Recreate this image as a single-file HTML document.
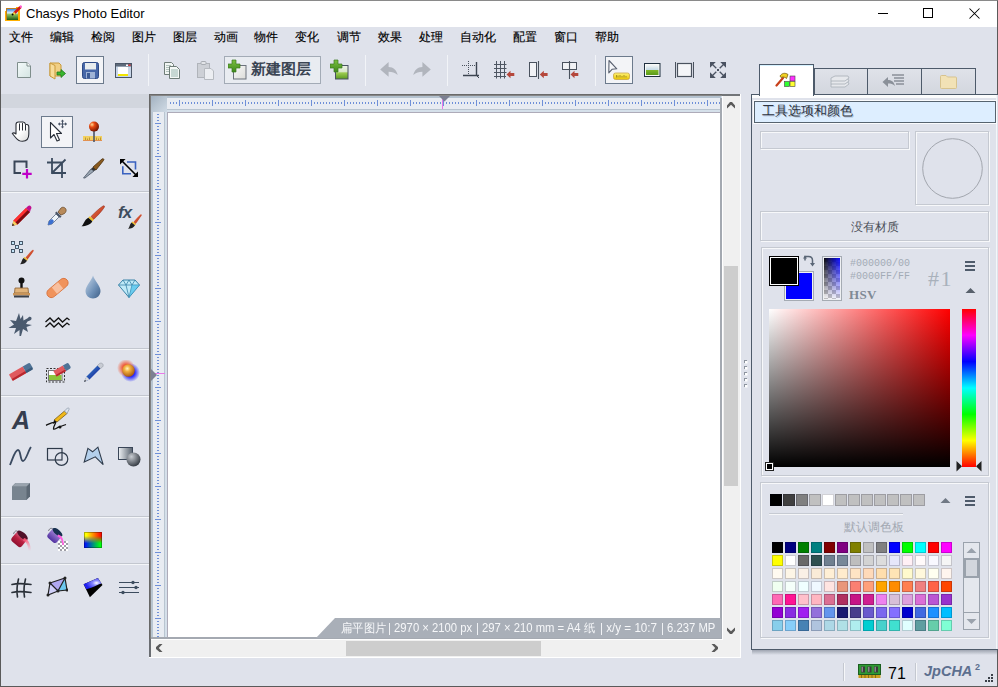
<!DOCTYPE html>
<html><head><meta charset="utf-8">
<style>
*{box-sizing:border-box}
html,body{margin:0;padding:0}
body{width:998px;height:687px;overflow:hidden;position:relative;background:#dfe2eb;font-family:"Liberation Sans",sans-serif;color:#000}
.a{position:absolute}
#win{position:absolute;left:0;top:0;width:998px;height:687px;border:1px solid #5a5a5a;border-top-color:#8a8a8a}
#title{left:1px;top:1px;width:996px;height:26px;background:#fff}
.menu{top:29px;font-size:12px;line-height:16px;color:#000;white-space:nowrap;-webkit-text-stroke:0.15px #000}
.sep{width:1px;background:#c7cbd3;border-right:1px solid #f2f4f8}
.tbtn{border:1px solid #6c7a8c;background:#f3f4f7}
.info{top:620px;font-size:12px;line-height:16px;color:#f6f7f9;white-space:nowrap;transform:scaleX(0.94);transform-origin:0 0}
.etch{border:1px solid #c5c9d1;box-shadow:1px 1px 0 #f7f8fa, inset 1px 1px 0 #f7f8fa}
.mono{font-family:"Liberation Mono",monospace;font-size:10px;line-height:13px;color:#a3abb6;white-space:nowrap}
</style></head><body>
<div id="win"></div>
<div id="title" class="a"></div>
<!-- app icon -->
<svg class="a" style="left:4px;top:4px" width="18" height="18" viewBox="0 0 18 18">
<defs><linearGradient id="gsky" x1="0" y1="0" x2="0" y2="1"><stop offset="0" stop-color="#3a86e0"/><stop offset="0.35" stop-color="#d8ecf8"/><stop offset="0.5" stop-color="#8ac060"/><stop offset="1" stop-color="#1e5a10"/></linearGradient></defs>
<path d="M1 7 H2 V16 H14 V4 H12 V3 H16 V17 H1 Z" fill="#ffb000"/>
<rect x="2" y="4" width="12" height="12" fill="#c08020"/>
<rect x="3" y="5" width="11" height="11" fill="url(#gsky)"/>
<path d="M10 9.5 L16.5 3" stroke="#d01818" stroke-width="2.6"/>
<path d="M9 10.5 L10.8 8.7" stroke="#f0e040" stroke-width="2.2"/>
<circle cx="8.6" cy="10.4" r="1" fill="#000"/>
<path d="M16.2 3.3 L17.6 1.9" stroke="#ff60d0" stroke-width="2.4"/>
</svg>
<div class="a" style="left:26px;top:5px;font-size:13px;line-height:17px;color:#000">Chasys Photo Editor</div>
<!-- window controls -->
<div class="a" style="left:878px;top:13px;width:10px;height:1px;background:#000"></div>
<div class="a" style="left:923px;top:8px;width:10px;height:10px;border:1px solid #000"></div>
<svg class="a" style="left:969px;top:8px" width="11" height="11" viewBox="0 0 11 11"><path d="M0.5 0.5 L10.5 10.5 M10.5 0.5 L0.5 10.5" stroke="#000" stroke-width="1.05"/></svg>

<!-- menu -->
<div class="a menu" style="left:9px">文件</div>
<div class="a menu" style="left:50px">编辑</div>
<div class="a menu" style="left:91px">检阅</div>
<div class="a menu" style="left:132px">图片</div>
<div class="a menu" style="left:173px">图层</div>
<div class="a menu" style="left:214px">动画</div>
<div class="a menu" style="left:254px">物件</div>
<div class="a menu" style="left:295px">变化</div>
<div class="a menu" style="left:337px">调节</div>
<div class="a menu" style="left:378px">效果</div>
<div class="a menu" style="left:419px">处理</div>
<div class="a menu" style="left:460px">自动化</div>
<div class="a menu" style="left:513px">配置</div>
<div class="a menu" style="left:554px">窗口</div>
<div class="a menu" style="left:595px">帮助</div>

<!-- TOOLBAR -->

<!-- separators -->
<div class="a sep" style="left:148px;top:54px;height:32px"></div>
<div class="a sep" style="left:365px;top:55px;height:31px"></div>
<div class="a sep" style="left:447px;top:55px;height:31px"></div>
<div class="a sep" style="left:595px;top:55px;height:31px"></div>
<!-- new -->
<svg class="a" style="left:16px;top:61px" width="16" height="18" viewBox="0 0 16 18">
<defs><linearGradient id="gnew" x1="0" y1="0" x2="1" y2="1"><stop offset="0" stop-color="#f4fafa"/><stop offset="1" stop-color="#d4e4e2"/></linearGradient></defs>
<path d="M1.5 1.5 H11 L14.5 5 V16.5 H1.5 Z" fill="url(#gnew)" stroke="#7f8e8c"/>
<path d="M11 1.5 V5 H14.5" fill="#fff" stroke="#7f8e8c"/>
</svg>
<!-- open -->
<svg class="a" style="left:49px;top:61px" width="18" height="19" viewBox="0 0 18 19">
<path d="M1 2 H10 L12 4 V15 H1 Z" fill="#f1cf84" stroke="#c99a3a"/>
<path d="M1 2 L6 4.5 V18 L1 15 Z" fill="#f7dc9a" stroke="#c99a3a"/>
<path d="M8 11 H12 V8.5 L16.5 12.5 L12 16.5 V14 H8 Z" fill="#39b52f" stroke="#1e7a1c" stroke-width="0.8"/>
</svg>
<!-- save (selected) -->
<div class="a tbtn" style="left:76px;top:56px;width:28px;height:28px"></div>
<svg class="a" style="left:82px;top:62px" width="17" height="17" viewBox="0 0 17 17">
<rect x="0.5" y="0.5" width="16" height="16" rx="2" fill="#4767a8" stroke="#2e4a86"/>
<rect x="3" y="1" width="11" height="6.5" fill="#e8ecee"/>
<rect x="4" y="10" width="9" height="6.5" fill="#9fb3d6"/>
<rect x="5" y="11" width="3" height="5.5" fill="#3c5a96"/>
</svg>
<!-- window -->
<svg class="a" style="left:115px;top:63px" width="17" height="15" viewBox="0 0 17 15">
<rect x="0.5" y="0.5" width="16" height="14" fill="#c9d6e8" stroke="#4a5566"/>
<rect x="1" y="1" width="15" height="2.5" fill="#5e6a7a"/>
<rect x="11" y="1.5" width="2" height="1.5" fill="#fff"/><rect x="13.5" y="1.5" width="2" height="1.5" fill="#e33"/>
<rect x="3" y="4" width="10" height="9" fill="#fff"/>
<rect x="3" y="11" width="10" height="2" fill="#f2e500"/>
</svg>
<!-- copy -->
<svg class="a" style="left:163px;top:61px" width="18" height="18" viewBox="0 0 18 18">
<path d="M1.5 1.5 H8.5 L10.5 3.5 V13.5 H1.5 Z" fill="#f2f6f4" stroke="#6f7d78"/>
<path d="M3 4.5 H8 M3 6.5 H8 M3 8.5 H8 M3 10.5 H6" stroke="#a9bcb6" stroke-width="0.9"/>
<path d="M6.5 5.5 H13.5 L16.5 8.5 V17.5 H6.5 Z" fill="#f4f8f6" stroke="#6f7d78"/>
<path d="M8 9 H15 M8 11 H15 M8 13 H15 M8 15 H15" stroke="#8fb0a8" stroke-width="0.9"/>
</svg>
<!-- paste disabled -->
<svg class="a" style="left:196px;top:60px" width="19" height="20" viewBox="0 0 19 20">
<rect x="1.5" y="3.5" width="12" height="14" fill="#cdd0d6" stroke="#b0b4ba"/>
<rect x="5" y="1.5" width="5" height="3" rx="1" fill="#e2e4e8" stroke="#a9adb3"/>
<path d="M8.5 8.5 H15 L17.5 11 V19.5 H8.5 Z" fill="#eceef2" stroke="#b6bac0"/>
</svg>
<!-- new layer button -->
<div class="a" style="left:224px;top:56px;width:97px;height:28px;border:1px solid #a3abb6;background:#e9ecf1"></div>
<svg class="a" style="left:228px;top:59px" width="19" height="21" viewBox="0 0 19 21">
<defs><linearGradient id="gplus" x1="0" y1="0" x2="0" y2="1"><stop offset="0" stop-color="#7cc040"/><stop offset="1" stop-color="#3f8a1c"/></linearGradient>
<linearGradient id="gsqw" x1="0" y1="0" x2="1" y2="1"><stop offset="0" stop-color="#fafafa"/><stop offset="1" stop-color="#dcdcd8"/></linearGradient></defs>
<rect x="5.5" y="6.5" width="12.5" height="13.5" fill="url(#gsqw)" stroke="#6c727c"/>
<path d="M4 1 H8 V5 H12 V9 H8 V13 H4 V9 H0 V5 H4 Z" fill="url(#gplus)" stroke="#3a7a20" stroke-width="0.7"/>
</svg>
<div class="a" style="left:251px;top:59px;font-size:15px;line-height:20px;font-weight:bold;color:#3b4553;letter-spacing:0px">新建图层</div>
<!-- new layer from image -->
<svg class="a" style="left:330px;top:59px" width="19" height="21" viewBox="0 0 19 21">
<defs><linearGradient id="gland" x1="0" y1="0" x2="0" y2="1"><stop offset="0" stop-color="#eef2e8"/><stop offset="0.45" stop-color="#d8e8c8"/><stop offset="0.55" stop-color="#9ccc50"/><stop offset="1" stop-color="#5a9a20"/></linearGradient></defs>
<rect x="5.5" y="6.5" width="12.5" height="13.5" fill="url(#gland)" stroke="#4a5262"/>
<path d="M4 1 H8 V5 H12 V9 H8 V13 H4 V9 H0 V5 H4 Z" fill="url(#gplus)" stroke="#3a7a20" stroke-width="0.7"/>
</svg>
<!-- undo / redo -->
<svg class="a" style="left:379px;top:61px" width="20" height="17" viewBox="0 0 20 17">
<path d="M1.2 8.5 L9.6 1 V5.9 C14.5 5.9 17.5 9 18.7 14 C16 11.5 13 10.8 9.6 10.8 V15.7 Z" fill="#b1b5bd"/>
</svg>
<svg class="a" style="left:412px;top:61px" width="20" height="17" viewBox="0 0 20 17">
<path d="M18.8 8.5 L10.4 1 V5.9 C5.5 5.9 2.5 9 1.3 14 C4 11.5 7 10.8 10.4 10.8 V15.7 Z" fill="#b1b5bd"/>
</svg>
<!-- crop corner -->
<svg class="a" style="left:461px;top:60px" width="20" height="19" viewBox="0 0 20 19">
<path d="M1 5.5 H14 M7.5 1 V14" stroke="#4a525e" stroke-dasharray="1 1"/>
<path d="M15.5 2 V15.5 M2 15.5 H18" stroke="#3c4450" stroke-width="1.4"/>
<path d="M15.5 15.5 L18 18" stroke="#3c4450"/>
</svg>
<!-- grid arrow -->
<svg class="a" style="left:494px;top:60px" width="21" height="19" viewBox="0 0 21 19">
<path d="M2.5 1 V18.5 M6.5 1 V18.5 M10.5 1 V18.5 M0 4.5 H12.5 M0 8.5 H12.5 M0 12.5 H12.5 M0 16.5 H12" stroke="#4e5662"/>
<path d="M12.5 14.5 L16.5 10.7 V12.9 H20.3 V16.1 H16.5 V18.3 Z" fill="#b5473b"/>
</svg>
<svg class="a" style="left:528px;top:60px" width="20" height="20" viewBox="0 0 20 20">
<rect x="1.5" y="2.5" width="7" height="14" fill="#f1f2f5" stroke="#4a525e"/>
<path d="M10.5 1 V19" stroke="#4a525e" stroke-width="1.1"/>
<path d="M11.8 14.5 L15.8 10.7 V12.9 H19.6 V16.1 H15.8 V18.3 Z" fill="#b5473b"/>
</svg>
<svg class="a" style="left:561px;top:60px" width="19" height="20" viewBox="0 0 19 20">
<rect x="1.5" y="2.5" width="14" height="7" fill="#f1f2f5" stroke="#4a525e"/>
<path d="M8.5 1 V19" stroke="#4a525e" stroke-width="1.1"/>
<path d="M9.5 14.5 L13.5 10.7 V12.9 H17.3 V16.1 H13.5 V18.3 Z" fill="#b5473b"/>
</svg>
<!-- selected cursor/ruler -->
<div class="a tbtn" style="left:605px;top:56px;width:28px;height:28px"></div>
<svg class="a" style="left:607px;top:59px" width="24" height="22" viewBox="0 0 24 22">
<defs><linearGradient id="gyel" x1="0" y1="0" x2="0" y2="1"><stop offset="0" stop-color="#fff47a"/><stop offset="1" stop-color="#e8c400"/></linearGradient></defs>
<path d="M2 1.5 L9.8 9.8 L5 10.3 L1.8 13.8 Z" fill="#f6f7fa" stroke="#5a6170" stroke-width="1.1" stroke-linejoin="round"/>
<rect x="6.5" y="14" width="16" height="6.5" rx="2" fill="url(#gyel)" stroke="#c9a646" stroke-width="0.8"/>
<path d="M9.5 16 V18.5 M11 16.5 V18.5 M13 16 V18.5 M15 17 V18.5 M17 16 V18.5 M19 17 V18.5" stroke="#8a7410" stroke-width="0.7"/>
</svg>
<!-- image -->
<svg class="a" style="left:644px;top:63px" width="17" height="14" viewBox="0 0 17 14">
<defs><linearGradient id="gimg" x1="0" y1="0" x2="0" y2="1"><stop offset="0" stop-color="#f4f6f6"/><stop offset="0.45" stop-color="#c8dce6"/><stop offset="0.5" stop-color="#80b828"/><stop offset="1" stop-color="#5a9a1a"/></linearGradient></defs>
<rect x="0.5" y="0.5" width="15.5" height="13" fill="#f8faf8" stroke="#203040"/>
<rect x="2" y="2" width="12.5" height="10" fill="url(#gimg)"/>
</svg>
<!-- frame -->
<svg class="a" style="left:675px;top:62px" width="20" height="16" viewBox="0 0 20 16">
<path d="M0.5 0 V16 M18.5 0 V16" stroke="#4a525e"/>
<rect x="2.5" y="1.5" width="14" height="13" fill="#f4f5f8" stroke="#4a525e" stroke-width="1.2"/>
</svg>
<!-- fullscreen -->
<svg class="a" style="left:710px;top:62px" width="16" height="16" viewBox="0 0 16 16">
<g fill="#4a5261"><path d="M0 0 H5.8 L0 5.8 Z M16 0 H10.2 L16 5.8 Z M0 16 H5.8 L0 10.2 Z M16 16 H10.2 L16 10.2 Z"/><rect x="7" y="7" width="2" height="2"/></g>
<path d="M2 2 L6.3 6.3 M14 2 L9.7 6.3 M2 14 L6.3 9.7 M14 14 L9.7 9.7" stroke="#4a5261" stroke-width="1.3"/>
</svg>



<div class="a" style="left:1px;top:94px;width:148px;height:14px;background:#d2d6de"></div>
<div id="toolbox"></div>
<!-- toolbox separators -->
<div class="a" style="left:1px;top:191px;width:148px;height:2px;border-top:1px solid #c3c7cf;background:#f4f6f9"></div>
<div class="a" style="left:1px;top:348px;width:148px;height:2px;border-top:1px solid #c3c7cf;background:#f4f6f9"></div>
<div class="a" style="left:1px;top:395px;width:148px;height:2px;border-top:1px solid #c3c7cf;background:#f4f6f9"></div>
<div class="a" style="left:1px;top:516px;width:148px;height:2px;border-top:1px solid #c3c7cf;background:#f4f6f9"></div>
<div class="a" style="left:1px;top:563px;width:148px;height:2px;border-top:1px solid #c3c7cf;background:#f4f6f9"></div>
<!-- row1 -->
<svg class="a" style="left:11px;top:121px" width="20" height="22" viewBox="0 0 20 22">
<defs><linearGradient id="ghand" x1="0" y1="0" x2="1" y2="1"><stop offset="0.5" stop-color="#fff"/><stop offset="1" stop-color="#d8d8d8"/></linearGradient></defs>
<path d="M5 13 V3.5 Q5 1 7.5 1 H12 Q14 1 14.5 3.3 Q17.8 3.3 17.8 6 V13 Q17.8 20.3 11.5 20.3 Q7.5 20.3 5 17 L1.3 12.5 Q2.8 11 5 13 Z" fill="url(#ghand)" stroke="#2a2e36" stroke-width="1.1" stroke-linejoin="round"/>
<path d="M8.5 2.5 V9.5 M11.5 2 V9.5 M14.5 3.5 V9.5" stroke="#2a2e36" stroke-width="1"/>
</svg>
<div class="a tbtn" style="left:41px;top:116px;width:32px;height:32px"></div>
<svg class="a" style="left:49px;top:119px" width="20" height="24" viewBox="0 0 20 24">
<path d="M1.5 3.5 V19 L5 15.5 L8 22 L10.5 21 L7.5 14.5 H12.5 Z" fill="#fff" stroke="#2a303a" stroke-width="1.1" stroke-linejoin="round"/>
<path d="M13.5 1 V9 M9.5 5 H17.5" stroke="#4a5566"/>
<path d="M13.5 0.5 L11.8 2.5 H15.2 Z M13.5 9.5 L11.8 7.5 H15.2 Z M9 5 L11 3.3 V6.7 Z M18 5 L16 3.3 V6.7 Z" fill="#4a5566"/>
</svg>
<svg class="a" style="left:83px;top:121px" width="20" height="22" viewBox="0 0 20 22">
<defs><radialGradient id="gball" cx="0.3" cy="0.3" r="0.75"><stop offset="0" stop-color="#ffd890"/><stop offset="0.35" stop-color="#e84a10"/><stop offset="1" stop-color="#701400"/></radialGradient></defs>
<rect x="0" y="15" width="19" height="4.6" fill="#f2d060"/>
<rect x="0" y="19" width="19" height="0.8" fill="#e08040"/>
<path d="M2.5 16.5 V19 M4.5 17.5 V19 M6.5 16.5 V19 M13.5 16.5 V19 M15.5 17.5 V19 M17.5 16.5 V19" stroke="#a88020" stroke-width="0.7"/>
<path d="M11 9 V21" stroke="#4a5566" stroke-width="1.6"/>
<circle cx="11" cy="5.6" r="5" fill="url(#gball)"/>
</svg>
<!-- row2 -->
<svg class="a" style="left:13px;top:159px" width="20" height="20" viewBox="0 0 20 20">
<path d="M13.5 9 V2.5 H1.5 V14 H8" fill="none" stroke="#3a4658" stroke-width="2"/>
<path d="M14 10 V19.5 M9.3 14.8 H18.7" stroke="#c000c8" stroke-width="2.2"/>
</svg>
<svg class="a" style="left:47px;top:158px" width="20" height="20" viewBox="0 0 20 20">
<path d="M5 0 V15 H19 M0 4.5 H15 V20 M4.5 15.5 L18.5 1.5" fill="none" stroke="#3a4a5e" stroke-width="1.8"/>
</svg>
<svg class="a" style="left:83px;top:157px" width="22" height="22" viewBox="0 0 22 22">
<path d="M0.5 21 L8 12 L11 14 L2 21 Z" fill="#9aa6b2" stroke="#4a5566" stroke-width="0.8"/>
<path d="M8 12 L10 10 L13 13 L11 14 Z" fill="#333"/>
<path d="M10 10 L19 2 C20.5 1 21.5 2.5 20.5 3.5 L13 13 Z" fill="#8a5a1e" stroke="#4a2e0a" stroke-width="0.8"/>
</svg>
<svg class="a" style="left:119px;top:158px" width="21" height="20" viewBox="0 0 21 20">
<path d="M8 4 H16.5 V11.5 M3.8 8.3 V15.8 H12" fill="none" stroke="#3a62c0" stroke-width="1.6"/>
<path d="M3 3 L17 17" stroke="#000" stroke-width="1.6"/>
<path d="M1 1 H6.6 L1 6.6 Z M19 19 H13.4 L19 13.4 Z" fill="#000"/>
</svg>
<!-- row3 -->
<svg class="a" style="left:11px;top:205px" width="21" height="22" viewBox="0 0 21 22">
<path d="M1 21 L2.5 15.5 L15 3 L19 7 L6.5 19.5 Z" fill="#d8101a"/>
<path d="M2.5 15.5 L15 3 L17 5 L4.5 17.5 Z" fill="#ff3030"/>
<path d="M4.5 17.5 L17 5 L19 7 L6.5 19.5 Z" fill="#7a0a10"/>
<path d="M15 3 L16.8 1.2 C17.8 0.3 19.3 0.4 20 1.4 C20.7 2.3 20.6 3.6 19.7 4.5 L19 7 Z" fill="#c01090"/>
<path d="M1 21 L2.5 15.5 L6.5 19.5 Z" fill="#f2d060"/><path d="M1 21 L1.7 18.6 L3.4 20.3 Z" fill="#222"/>
</svg>
<svg class="a" style="left:47px;top:206px" width="20" height="20" viewBox="0 0 20 20">
<path d="M1 19 L2 15 L9 8 L12 11 L5 18 Z" fill="#eef4fa" stroke="#5a6a80" stroke-width="0.8"/>
<path d="M1 19 L2 15 L5 13 L7 15 L5 18 Z" fill="#3b6fd0"/>
<path d="M8 7 L13 12 L14.5 10.5 L9.5 5.5 Z" fill="#4a5566"/>
<path d="M11 6 L14 2 C15.5 0.5 18.5 1.5 19 3.5 C19.5 5 18.5 6.5 17.5 7.5 L14 9 Z" fill="#b88a5a" stroke="#6a4a2a" stroke-width="0.8"/>
</svg>
<svg class="a" style="left:81px;top:205px" width="24" height="22" viewBox="0 0 24 22"><defs><linearGradient id="gbr" x1="0" y1="0" x2="1" y2="1"><stop offset="0" stop-color="#f08050"/><stop offset="1" stop-color="#b02010"/></linearGradient></defs>
<path d="M10 11.5 C14 7.5 18.5 3 22 1 C23.3 0.3 24 1.3 23.3 2.3 C21 6 16.5 11 12.5 14.5 Z" fill="url(#gbr)" stroke="#8a2010" stroke-width="0.5"/>
<path d="M8.8 11.2 L12.8 14.8 L11.3 16.3 L7.3 12.7 Z" fill="#f0c020"/>
<path d="M7.3 12.7 L11.3 16.3 C9.8 19.8 5 21.3 0.5 21.3 C3 19.3 3 15 7.3 12.7 Z" fill="#111"/>
</svg>
<svg class="a" style="left:117px;top:203px" width="25" height="27" viewBox="0 0 25 27">
<text x="1" y="15" font-family="Liberation Sans" font-style="italic" font-weight="bold" font-size="17" fill="#3e4d5e" letter-spacing="-1">fx</text>
<path d="M16.5 19 C19 16 21.5 13 23.5 11.5 C24.5 11 25 12 24.5 12.8 C23 15 20.5 18.5 18.5 21 Z" fill="url(#gbr)"/>
<path d="M15.5 18.5 L19 21.3 L18 22.3 L14.5 19.5 Z" fill="#f0c020"/>
<path d="M14.5 19.5 L18 22.3 C16.8 24.8 14 25.8 11 25.8 C12.8 24.3 12.5 21.3 14.5 19.5 Z" fill="#222"/>
</svg>
<!-- row4 scatter -->
<svg class="a" style="left:10px;top:240px" width="24" height="25" viewBox="0 0 24 25">
<g fill="#c4e4f8" stroke="#3a4a5c" stroke-width="0.9"><rect x="1.5" y="1.5" width="3" height="3"/><rect x="9.5" y="1.5" width="3" height="3"/><rect x="5.5" y="5.5" width="3" height="3"/><rect x="1.5" y="9.5" width="3" height="3"/><rect x="9.5" y="9.5" width="3" height="3"/></g>
<path d="M15.5 17.5 C18 14.5 20.5 11.5 22.5 10 C23.5 9.5 24 10.5 23.5 11.3 C22 13.5 19.5 17 17.5 19.5 Z" fill="url(#gbr)"/>
<path d="M14.5 17 L18 19.8 L17 20.8 L13.5 18 Z" fill="#f0c020"/>
<path d="M13.5 18 L17 20.8 C15.8 23.3 13 24.3 10 24.3 C11.8 22.8 11.5 19.8 13.5 18 Z" fill="#222"/>
</svg>
<!-- row5 -->
<svg class="a" style="left:12px;top:277px" width="19" height="21" viewBox="0 0 19 21">
<circle cx="9.5" cy="3.5" r="3" fill="#111"/><rect x="8.3" y="5" width="2.4" height="6" fill="#111"/>
<path d="M3 11 H16 L16.5 16 H2.5 Z" fill="#e2b47a" stroke="#8a6030" stroke-width="0.8"/>
<rect x="1" y="16" width="17" height="2.5" fill="#c9955a"/>
<rect x="2" y="18.5" width="15" height="2" fill="#3a3f48"/>
</svg>
<svg class="a" style="left:46px;top:277px" width="23" height="22" viewBox="0 0 23 22">
<g transform="rotate(-40 11.5 11)"><rect x="-1" y="6.5" width="25" height="9" rx="4.5" fill="#f0935c" stroke="#d8703a" stroke-width="0.8"/><rect x="7.5" y="7" width="8" height="8" fill="#f8c0a0"/></g>
</svg>
<svg class="a" style="left:84px;top:275px" width="18" height="24" viewBox="0 0 18 24">
<defs><linearGradient id="gdrop" x1="0" y1="0" x2="1" y2="1"><stop offset="0" stop-color="#c8d8ea"/><stop offset="0.6" stop-color="#6d8fb6"/><stop offset="1" stop-color="#3f5f86"/></linearGradient></defs>
<path d="M9 0.5 C10 5 16.5 11 16.5 16 C16.5 20.5 13 23.5 9 23.5 C5 23.5 1.5 20.5 1.5 16 C1.5 11 8 5 9 0.5 Z" fill="url(#gdrop)"/>
</svg>
<svg class="a" style="left:118px;top:279px" width="22" height="19" viewBox="0 0 22 19">
<path d="M5 1 H17 L21.5 6 L11 18.5 L0.5 6 Z" fill="#bfeaf8" stroke="#3a84a8" stroke-width="1"/>
<path d="M0.5 6 H21.5 M5 1 L8 6 L11 18.5 L14 6 L17 1 M11 1 L8 6 M11 1 L14 6" stroke="#3a84a8" stroke-width="0.8" fill="none"/>
<path d="M14 6 L21.5 6 L11 18.5 Z" fill="#35b8e8" opacity="0.6"/>
</svg>
<!-- row6 -->
<svg class="a" style="left:8px;top:312px" width="25" height="25" viewBox="0 0 25 25">
<path d="M11 1 L12.5 7 L15 3 L15.5 8.5 L20 6 C21 4 24 4.5 23.5 7 C23 8.5 21 8.5 19.5 9.5 L18 12 L24 13 L18.5 15 L20 20 L15 17 L13 24 L11.5 24 L11.5 18 L6 22 L8 16 L0.5 16 L6 12.5 L2 8 L8 9 Z" fill="#4a5a6e"/>
</svg>
<svg class="a" style="left:45px;top:316px" width="25" height="14" viewBox="0 0 25 14">
<path d="M0.5 6 L5 2 L9 6 L13.5 2 L17.5 6 L22 2 L24.5 4 M0.5 11 L5 7 L9 11 L13.5 7 L17.5 11 L22 7 L24.5 9" fill="none" stroke="#111" stroke-width="1.3"/>
</svg>
<!-- row7 -->
<svg class="a" style="left:9px;top:362px" width="24" height="19" viewBox="0 0 24 19">
<g transform="rotate(-30 12 9.5)">
<path d="M1 6 H16 V13.5 H1 Q0 13.5 0 12.5 V7 Q0 6 1 6 Z" fill="#e05a5e"/>
<rect x="0.3" y="11.3" width="15.7" height="2.2" fill="#b8282e"/>
<path d="M16 6 H22 Q24 6 24 8 V11.5 Q24 13.5 22 13.5 H16 Z" fill="#4f7396"/>
<rect x="16" y="11.3" width="7.5" height="2.2" fill="#3a5a7a"/>
</g>
</svg>
<svg class="a" style="left:45px;top:361px" width="26" height="22" viewBox="0 0 26 22">
<rect x="1.5" y="7.5" width="18" height="13.5" fill="none" stroke="#333" stroke-dasharray="2 1.5"/>
<rect x="3.5" y="9.5" width="13.5" height="10" fill="#fff" stroke="#777"/>
<rect x="4" y="14" width="12.5" height="5" fill="#8cc43a"/>
<g transform="rotate(-30 17 9)">
<path d="M9 5.5 H20 V12 H9 Z" fill="#e05a5e"/>
<rect x="9" y="10.2" width="11" height="1.8" fill="#b8282e"/>
<path d="M20 5.5 H24 Q26 5.5 26 7.5 V10 Q26 12 24 12 H20 Z" fill="#4f7396"/>
</g>
</svg>
<svg class="a" style="left:83px;top:362px" width="21" height="21" viewBox="0 0 21 21">
<defs><linearGradient id="gbp" x1="0" y1="0" x2="1" y2="1"><stop offset="0" stop-color="#40a0d8"/><stop offset="0.6" stop-color="#2040a8"/><stop offset="1" stop-color="#101870"/></linearGradient></defs>
<path d="M1 20 L3.5 14.5 L14.5 3.5 L17.5 6.5 L6.5 17.5 Z" fill="url(#gbp)"/>
<path d="M14.5 3.5 L16.3 1.7 C17.3 0.8 18.7 0.9 19.6 1.8 C20.4 2.7 20.4 4 19.5 5 L17.5 6.5 Z" fill="#c8ccd4" stroke="#8a9098" stroke-width="0.5"/>
<path d="M1 20 L3.5 14.5 L6.5 17.5 Z" fill="#d8dadc"/><path d="M1 20 L1.9 17.8 L3.3 19.1 Z" fill="#444"/>
</svg>
<svg class="a" style="left:117px;top:360px" width="23" height="22" viewBox="0 0 23 22">
<defs><radialGradient id="gorb" cx="0.4" cy="0.35" r="0.65"><stop offset="0" stop-color="#fff4c0"/><stop offset="0.35" stop-color="#f2b040"/><stop offset="1" stop-color="#a85a10"/></radialGradient>
<radialGradient id="gglowb" cx="0.5" cy="0.5" r="0.5"><stop offset="0.45" stop-color="#2a2aff"/><stop offset="1" stop-color="#2a2aff" stop-opacity="0"/></radialGradient>
<radialGradient id="gglowr" cx="0.5" cy="0.5" r="0.5"><stop offset="0.4" stop-color="#f06040"/><stop offset="1" stop-color="#f06040" stop-opacity="0"/></radialGradient></defs>
<circle cx="13.5" cy="12.5" r="9.5" fill="url(#gglowb)"/>
<circle cx="9" cy="8" r="9" fill="url(#gglowr)"/>
<circle cx="11.5" cy="10.5" r="6.3" fill="url(#gorb)"/>
</svg>
<!-- row8 -->
<div class="a" style="left:12px;top:406px;font-family:'Liberation Sans';font-weight:bold;font-style:italic;font-size:25px;line-height:28px;color:#353d4e">A</div>
<svg class="a" style="left:45px;top:406px" width="25" height="25" viewBox="0 0 25 25">
<path d="M9 14 L19.5 5 L22 7.5 L12 16 Z" fill="#f0b818" stroke="#6a5010" stroke-width="0.7"/>
<path d="M19.5 5 L22.5 2 C23.5 1.5 24.5 2.5 24 3.5 L22 7.5 Z" fill="#dde4ee" stroke="#8a96a6" stroke-width="0.7"/>
<path d="M9 14 L12 16 L8.2 18 Z" fill="#111"/>
<path d="M1 19.3 C4 18 8 15.5 10.5 16.5 C11 17.5 8 20.5 8.5 23 C9.5 24 12 21.5 14 21 L21 18.5" fill="none" stroke="#111" stroke-width="1.3"/>
<circle cx="15" cy="21" r="1.5" fill="#111"/>
</svg>
<!-- row9 -->
<svg class="a" style="left:9px;top:446px" width="23" height="20" viewBox="0 0 23 20">
<path d="M1 19 C4 12 6 4 9 4 C12 4 11 15 14 15 C17 15 19 5 22 1" fill="none" stroke="#3a4a60" stroke-width="1.8"/>
</svg>
<svg class="a" style="left:46px;top:447px" width="23" height="19" viewBox="0 0 23 19">
<rect x="1.5" y="1.5" width="14.5" height="11.5" fill="none" stroke="#2e3a4a" stroke-width="1.2"/>
<circle cx="15.5" cy="12" r="6.3" fill="none" stroke="#2e3a4a" stroke-width="1.2"/>
</svg>
<svg class="a" style="left:83px;top:446px" width="21" height="20" viewBox="0 0 21 20">
<path d="M4.9 2.4 L9.6 5.8 L14.9 1.2 L20.2 18.7 L12.3 10.8 L1.2 16.1 Z" fill="#b4d0ec" stroke="#2e3a4a" stroke-width="1.1" stroke-linejoin="miter"/>
</svg>
<svg class="a" style="left:118px;top:447px" width="23" height="20" viewBox="0 0 23 20">
<defs><linearGradient id="gsq" x1="0" y1="0" x2="1" y2="0"><stop offset="0" stop-color="#eef1f4"/><stop offset="1" stop-color="#56606c"/></linearGradient>
<radialGradient id="gsph" cx="0.35" cy="0.3" r="0.7"><stop offset="0" stop-color="#c8ccd2"/><stop offset="1" stop-color="#3a4048"/></radialGradient></defs>
<rect x="0.5" y="0.5" width="14" height="12" fill="url(#gsq)" stroke="#3a4658"/>
<circle cx="15.5" cy="12.5" r="7" fill="url(#gsph)"/>
</svg>
<!-- row10 -->
<svg class="a" style="left:11px;top:482px" width="20" height="19" viewBox="0 0 20 19">
<path d="M1 4.5 L4.5 1 H19 V14.5 L15.5 18 H1 Z" fill="#5c6874"/>
<path d="M1 4.5 H15.5 V18 H1 Z" fill="#78848f"/>
<path d="M1 4.5 L4.5 1 H19 L15.5 4.5 Z" fill="#9aa4ae"/>
</svg>
<!-- row11 -->
<svg class="a" style="left:10px;top:528px" width="23" height="24" viewBox="0 0 23 24">
<defs><linearGradient id="gbk" x1="0" y1="0" x2="0" y2="1"><stop offset="0" stop-color="#e07090"/><stop offset="0.5" stop-color="#b82040"/><stop offset="1" stop-color="#901030"/></linearGradient>
<linearGradient id="gpour" x1="0" y1="0" x2="0" y2="1"><stop offset="0" stop-color="#ff5070"/><stop offset="1" stop-color="#ff90a8" stop-opacity="0"/></linearGradient></defs>
<path d="M3.5 6 C4.5 2.5 7 2 8.5 4.5" fill="none" stroke="#50505a" stroke-width="0.7"/>
<g transform="rotate(40 10 11)"><rect x="3" y="6" width="13" height="12" rx="3" fill="url(#gbk)"/><ellipse cx="9.5" cy="6.5" rx="6.5" ry="2.8" fill="#501028"/></g>
<path d="M14 10 C18 11 20.5 15 21 23 L18.5 23 C18 17 16.5 14 13 12.5 Z" fill="url(#gpour)"/>
</svg>
<svg class="a" style="left:46px;top:527px" width="23" height="26" viewBox="0 0 23 26">
<defs><pattern id="chk" width="4" height="4" patternUnits="userSpaceOnUse"><rect width="4" height="4" fill="#fff"/><rect width="2" height="2" fill="#a0a0a8"/><rect x="2" y="2" width="2" height="2" fill="#a0a0a8"/></pattern>
<linearGradient id="gbk2" x1="0" y1="0" x2="0" y2="1"><stop offset="0" stop-color="#b090e0"/><stop offset="1" stop-color="#5030a0"/></linearGradient></defs>
<rect x="12" y="14" width="10" height="10" fill="url(#chk)"/>
<path d="M2.5 4 C3.5 0.8 6 0.5 7.5 3" fill="none" stroke="#50505a" stroke-width="0.7"/>
<g transform="rotate(40 9 9)"><rect x="2.5" y="4" width="12" height="11" rx="3" fill="url(#gbk2)"/><ellipse cx="8.5" cy="4.5" rx="6" ry="2.6" fill="#183050"/></g>
<path d="M12 7.5 C15.5 8.5 17.5 11 18 18 L16.3 18 C16 13 14.5 11 11.5 9.5 Z" fill="#ff60e0"/>
</svg>
<svg class="a" style="left:84px;top:532px" width="18" height="16" viewBox="0 0 18 16">
<defs><linearGradient id="gg1" x1="0" y1="0" x2="1" y2="0"><stop offset="0.15" stop-color="#ffff00"/><stop offset="0.9" stop-color="#ff1000"/></linearGradient>
<linearGradient id="gg2" x1="0" y1="0" x2="1" y2="0"><stop offset="0.05" stop-color="#0010ff"/><stop offset="0.9" stop-color="#00ff10"/></linearGradient>
<linearGradient id="gmask" x1="0" y1="0" x2="0" y2="1"><stop offset="0.25" stop-color="#fff"/><stop offset="0.7" stop-color="#000"/></linearGradient>
<mask id="mk"><rect width="18" height="16" fill="url(#gmask)"/></mask></defs>
<rect x="0" y="0" width="18" height="16" fill="url(#gg2)"/>
<rect x="0" y="0" width="18" height="16" fill="url(#gg1)" mask="url(#mk)"/>
<rect x="0.5" y="0.5" width="17" height="15" fill="none" stroke="rgba(0,0,0,0.3)"/>
</svg>
<!-- row12 -->
<svg class="a" style="left:11px;top:578px" width="21" height="20" viewBox="0 0 21 20">
<path d="M7.5 1 C6 7 5.5 13 6.5 19 M14.5 1 C13 7 12.5 13 13.5 19 M1 6.5 C7 5 13 5.5 20 6.5 M1 14.5 C7 13 13 13.5 20 14.5" fill="none" stroke="#2a3038" stroke-width="1.6" stroke-linecap="round"/>
</svg>
<svg class="a" style="left:46px;top:576px" width="22" height="22" viewBox="0 0 22 22">
<path d="M4 7 L19 2 L12 15 Z" fill="#b0a8f0"/><path d="M19 2 L21 14 L12 15 Z" fill="#6cc8f0"/><path d="M4 7 L12 15 L2 19 Z" fill="#d0d0f8"/>
<path d="M4 7 L19 2 L21 14 L12 15 L2 19 Z M4 7 L12 15 L19 2" fill="none" stroke="#222" stroke-width="1.2"/>
<g fill="#222"><circle cx="4" cy="7" r="1.5"/><circle cx="19" cy="2" r="1.5"/><circle cx="21" cy="14" r="1.5"/><circle cx="12" cy="15" r="1.5"/><circle cx="2" cy="19" r="1.5"/></g>
</svg>
<svg class="a" style="left:82px;top:577px" width="22" height="21" viewBox="0 0 22 21">
<defs><radialGradient id="gbw" cx="0.72" cy="0.45" r="0.6"><stop offset="0" stop-color="#ffffff"/><stop offset="0.35" stop-color="#8a8aff"/><stop offset="1" stop-color="#2020f0"/></radialGradient></defs>
<path d="M1.6 7.3 L15.9 0.9 L20.5 7.9 L7.9 20.2 Z" fill="#000"/>
<path d="M1.6 7.3 L15.9 0.9 L19.5 6.4 C16 7 13.5 9 11 10 C8.5 11 6.5 11.5 4.4 12.2 Z" fill="url(#gbw)"/>
</svg>
<svg class="a" style="left:118px;top:580px" width="22" height="15" viewBox="0 0 22 15">
<path d="M1 2.5 H21 M1 7.5 H21 M1 12.5 H21" stroke="#3c4c5e" stroke-width="1.2"/>
<circle cx="15" cy="2.5" r="1.7" fill="#3c4c5e"/><circle cx="18" cy="7.5" r="1.7" fill="#3c4c5e"/><circle cx="5" cy="12.5" r="1.7" fill="#3c4c5e"/>
</svg>



<div id="canvas"></div>

<!-- canvas frame -->
<div class="a" style="left:149px;top:94px;width:573px;height:545px;background:#d5e0ea"></div>
<div class="a" style="left:151px;top:96px;width:16px;height:16px;background:linear-gradient(135deg,#a3b2c1 0%,#bac7d3 50%,#d0dbe6 100%)"></div>
<div class="a" style="left:167px;top:96px;width:554px;height:2px;background:#b4c2cf"></div>
<div class="a" style="left:151px;top:112px;width:2px;height:525px;background:#b8c5d1"></div>
<div class="a" style="left:149px;top:94px;width:573px;height:1px;background:#6a6a6a"></div>
<div class="a" style="left:149px;top:95px;width:573px;height:1px;background:#858585"></div>
<div class="a" style="left:149px;top:94px;width:1px;height:545px;background:#686868"></div>
<div class="a" style="left:150px;top:95px;width:1px;height:544px;background:#808080"></div>
<svg class="a" style="left:167px;top:98px" width="554" height="12" viewBox="0 0 554 12"><rect x="0" y="0" width="554" height="12" fill="#e8ecf2"/><rect x="0" y="11" width="554" height="1" fill="#b9c5d0"/><g fill="#6f90d8"><rect x="3" y="4" width="1" height="2"/><rect x="6" y="4" width="1" height="2"/><rect x="9" y="4" width="1" height="2"/><rect x="12" y="2" width="1" height="6"/><rect x="15" y="4" width="1" height="2"/><rect x="18" y="4" width="1" height="2"/><rect x="21" y="4" width="1" height="2"/><rect x="24" y="4" width="1" height="2"/><rect x="27" y="4" width="1" height="2"/><rect x="30" y="4" width="1" height="2"/><rect x="33" y="4" width="1" height="2"/><rect x="36" y="4" width="1" height="2"/><rect x="39" y="4" width="1" height="2"/><rect x="42" y="4" width="1" height="2"/><rect x="45" y="2" width="1" height="6"/><rect x="48" y="4" width="1" height="2"/><rect x="51" y="4" width="1" height="2"/><rect x="54" y="4" width="1" height="2"/><rect x="57" y="4" width="1" height="2"/><rect x="60" y="4" width="1" height="2"/><rect x="63" y="4" width="1" height="2"/><rect x="66" y="4" width="1" height="2"/><rect x="69" y="4" width="1" height="2"/><rect x="72" y="4" width="1" height="2"/><rect x="75" y="4" width="1" height="2"/><rect x="78" y="2" width="1" height="6"/><rect x="81" y="4" width="1" height="2"/><rect x="84" y="4" width="1" height="2"/><rect x="87" y="4" width="1" height="2"/><rect x="90" y="4" width="1" height="2"/><rect x="93" y="4" width="1" height="2"/><rect x="96" y="4" width="1" height="2"/><rect x="99" y="4" width="1" height="2"/><rect x="102" y="4" width="1" height="2"/><rect x="105" y="4" width="1" height="2"/><rect x="108" y="4" width="1" height="2"/><rect x="111" y="2" width="1" height="6"/><rect x="114" y="4" width="1" height="2"/><rect x="117" y="4" width="1" height="2"/><rect x="120" y="4" width="1" height="2"/><rect x="123" y="4" width="1" height="2"/><rect x="126" y="4" width="1" height="2"/><rect x="129" y="4" width="1" height="2"/><rect x="132" y="4" width="1" height="2"/><rect x="135" y="4" width="1" height="2"/><rect x="138" y="4" width="1" height="2"/><rect x="141" y="4" width="1" height="2"/><rect x="144" y="2" width="1" height="6"/><rect x="147" y="4" width="1" height="2"/><rect x="150" y="4" width="1" height="2"/><rect x="153" y="4" width="1" height="2"/><rect x="156" y="4" width="1" height="2"/><rect x="159" y="4" width="1" height="2"/><rect x="162" y="4" width="1" height="2"/><rect x="165" y="4" width="1" height="2"/><rect x="168" y="4" width="1" height="2"/><rect x="171" y="4" width="1" height="2"/><rect x="174" y="4" width="1" height="2"/><rect x="177" y="2" width="1" height="6"/><rect x="180" y="4" width="1" height="2"/><rect x="183" y="4" width="1" height="2"/><rect x="186" y="4" width="1" height="2"/><rect x="189" y="4" width="1" height="2"/><rect x="192" y="4" width="1" height="2"/><rect x="195" y="4" width="1" height="2"/><rect x="198" y="4" width="1" height="2"/><rect x="201" y="4" width="1" height="2"/><rect x="204" y="4" width="1" height="2"/><rect x="207" y="4" width="1" height="2"/><rect x="210" y="2" width="1" height="6"/><rect x="213" y="4" width="1" height="2"/><rect x="216" y="4" width="1" height="2"/><rect x="219" y="4" width="1" height="2"/><rect x="222" y="4" width="1" height="2"/><rect x="225" y="4" width="1" height="2"/><rect x="228" y="4" width="1" height="2"/><rect x="231" y="4" width="1" height="2"/><rect x="234" y="4" width="1" height="2"/><rect x="237" y="4" width="1" height="2"/><rect x="240" y="4" width="1" height="2"/><rect x="243" y="2" width="1" height="6"/><rect x="246" y="4" width="1" height="2"/><rect x="249" y="4" width="1" height="2"/><rect x="252" y="4" width="1" height="2"/><rect x="255" y="4" width="1" height="2"/><rect x="258" y="4" width="1" height="2"/><rect x="261" y="4" width="1" height="2"/><rect x="264" y="4" width="1" height="2"/><rect x="267" y="4" width="1" height="2"/><rect x="270" y="4" width="1" height="2"/><rect x="273" y="4" width="1" height="2"/><rect x="276" y="2" width="1" height="6"/><rect x="279" y="4" width="1" height="2"/><rect x="282" y="4" width="1" height="2"/><rect x="285" y="4" width="1" height="2"/><rect x="288" y="4" width="1" height="2"/><rect x="291" y="4" width="1" height="2"/><rect x="294" y="4" width="1" height="2"/><rect x="297" y="4" width="1" height="2"/><rect x="300" y="4" width="1" height="2"/><rect x="303" y="4" width="1" height="2"/><rect x="306" y="4" width="1" height="2"/><rect x="309" y="2" width="1" height="6"/><rect x="312" y="4" width="1" height="2"/><rect x="315" y="4" width="1" height="2"/><rect x="318" y="4" width="1" height="2"/><rect x="321" y="4" width="1" height="2"/><rect x="324" y="4" width="1" height="2"/><rect x="327" y="4" width="1" height="2"/><rect x="330" y="4" width="1" height="2"/><rect x="333" y="4" width="1" height="2"/><rect x="336" y="4" width="1" height="2"/><rect x="339" y="4" width="1" height="2"/><rect x="342" y="2" width="1" height="6"/><rect x="345" y="4" width="1" height="2"/><rect x="348" y="4" width="1" height="2"/><rect x="351" y="4" width="1" height="2"/><rect x="354" y="4" width="1" height="2"/><rect x="357" y="4" width="1" height="2"/><rect x="360" y="4" width="1" height="2"/><rect x="363" y="4" width="1" height="2"/><rect x="366" y="4" width="1" height="2"/><rect x="369" y="4" width="1" height="2"/><rect x="372" y="4" width="1" height="2"/><rect x="375" y="2" width="1" height="6"/><rect x="378" y="4" width="1" height="2"/><rect x="381" y="4" width="1" height="2"/><rect x="384" y="4" width="1" height="2"/><rect x="387" y="4" width="1" height="2"/><rect x="390" y="4" width="1" height="2"/><rect x="393" y="4" width="1" height="2"/><rect x="396" y="4" width="1" height="2"/><rect x="399" y="4" width="1" height="2"/><rect x="402" y="4" width="1" height="2"/><rect x="405" y="4" width="1" height="2"/><rect x="408" y="2" width="1" height="6"/><rect x="411" y="4" width="1" height="2"/><rect x="414" y="4" width="1" height="2"/><rect x="417" y="4" width="1" height="2"/><rect x="420" y="4" width="1" height="2"/><rect x="423" y="4" width="1" height="2"/><rect x="426" y="4" width="1" height="2"/><rect x="429" y="4" width="1" height="2"/><rect x="432" y="4" width="1" height="2"/><rect x="435" y="4" width="1" height="2"/><rect x="438" y="4" width="1" height="2"/><rect x="441" y="2" width="1" height="6"/><rect x="444" y="4" width="1" height="2"/><rect x="447" y="4" width="1" height="2"/><rect x="450" y="4" width="1" height="2"/><rect x="453" y="4" width="1" height="2"/><rect x="456" y="4" width="1" height="2"/><rect x="459" y="4" width="1" height="2"/><rect x="462" y="4" width="1" height="2"/><rect x="465" y="4" width="1" height="2"/><rect x="468" y="4" width="1" height="2"/><rect x="471" y="4" width="1" height="2"/><rect x="474" y="2" width="1" height="6"/><rect x="477" y="4" width="1" height="2"/><rect x="480" y="4" width="1" height="2"/><rect x="483" y="4" width="1" height="2"/><rect x="486" y="4" width="1" height="2"/><rect x="489" y="4" width="1" height="2"/><rect x="492" y="4" width="1" height="2"/><rect x="495" y="4" width="1" height="2"/><rect x="498" y="4" width="1" height="2"/><rect x="501" y="4" width="1" height="2"/><rect x="504" y="4" width="1" height="2"/><rect x="507" y="2" width="1" height="6"/><rect x="510" y="4" width="1" height="2"/><rect x="513" y="4" width="1" height="2"/><rect x="516" y="4" width="1" height="2"/><rect x="519" y="4" width="1" height="2"/><rect x="522" y="4" width="1" height="2"/><rect x="525" y="4" width="1" height="2"/><rect x="528" y="4" width="1" height="2"/><rect x="531" y="4" width="1" height="2"/><rect x="534" y="4" width="1" height="2"/><rect x="537" y="4" width="1" height="2"/><rect x="540" y="2" width="1" height="6"/><rect x="543" y="4" width="1" height="2"/><rect x="546" y="4" width="1" height="2"/><rect x="549" y="4" width="1" height="2"/><rect x="552" y="4" width="1" height="2"/></g></svg>
<svg class="a" style="left:153px;top:112px" width="12" height="525" viewBox="0 0 12 525"><rect x="0" y="0" width="12" height="525" fill="#e8ecf2"/><rect x="11" y="0" width="1" height="525" fill="#b9c5d0"/><g fill="#6f90d8"><rect x="4" y="2" width="2" height="1"/><rect x="4" y="5" width="2" height="1"/><rect x="4" y="8" width="2" height="1"/><rect x="2" y="11" width="6" height="1"/><rect x="4" y="14" width="2" height="1"/><rect x="4" y="17" width="2" height="1"/><rect x="4" y="20" width="2" height="1"/><rect x="4" y="23" width="2" height="1"/><rect x="4" y="26" width="2" height="1"/><rect x="4" y="29" width="2" height="1"/><rect x="4" y="32" width="2" height="1"/><rect x="4" y="35" width="2" height="1"/><rect x="4" y="38" width="2" height="1"/><rect x="4" y="41" width="2" height="1"/><rect x="2" y="44" width="6" height="1"/><rect x="4" y="47" width="2" height="1"/><rect x="4" y="50" width="2" height="1"/><rect x="4" y="53" width="2" height="1"/><rect x="4" y="56" width="2" height="1"/><rect x="4" y="59" width="2" height="1"/><rect x="4" y="62" width="2" height="1"/><rect x="4" y="65" width="2" height="1"/><rect x="4" y="68" width="2" height="1"/><rect x="4" y="71" width="2" height="1"/><rect x="4" y="74" width="2" height="1"/><rect x="2" y="77" width="6" height="1"/><rect x="4" y="80" width="2" height="1"/><rect x="4" y="83" width="2" height="1"/><rect x="4" y="86" width="2" height="1"/><rect x="4" y="89" width="2" height="1"/><rect x="4" y="92" width="2" height="1"/><rect x="4" y="95" width="2" height="1"/><rect x="4" y="98" width="2" height="1"/><rect x="4" y="101" width="2" height="1"/><rect x="4" y="104" width="2" height="1"/><rect x="4" y="107" width="2" height="1"/><rect x="2" y="110" width="6" height="1"/><rect x="4" y="113" width="2" height="1"/><rect x="4" y="116" width="2" height="1"/><rect x="4" y="119" width="2" height="1"/><rect x="4" y="122" width="2" height="1"/><rect x="4" y="125" width="2" height="1"/><rect x="4" y="128" width="2" height="1"/><rect x="4" y="131" width="2" height="1"/><rect x="4" y="134" width="2" height="1"/><rect x="4" y="137" width="2" height="1"/><rect x="4" y="140" width="2" height="1"/><rect x="2" y="143" width="6" height="1"/><rect x="4" y="146" width="2" height="1"/><rect x="4" y="149" width="2" height="1"/><rect x="4" y="152" width="2" height="1"/><rect x="4" y="155" width="2" height="1"/><rect x="4" y="158" width="2" height="1"/><rect x="4" y="161" width="2" height="1"/><rect x="4" y="164" width="2" height="1"/><rect x="4" y="167" width="2" height="1"/><rect x="4" y="170" width="2" height="1"/><rect x="4" y="173" width="2" height="1"/><rect x="2" y="176" width="6" height="1"/><rect x="4" y="179" width="2" height="1"/><rect x="4" y="182" width="2" height="1"/><rect x="4" y="185" width="2" height="1"/><rect x="4" y="188" width="2" height="1"/><rect x="4" y="191" width="2" height="1"/><rect x="4" y="194" width="2" height="1"/><rect x="4" y="197" width="2" height="1"/><rect x="4" y="200" width="2" height="1"/><rect x="4" y="203" width="2" height="1"/><rect x="4" y="206" width="2" height="1"/><rect x="2" y="209" width="6" height="1"/><rect x="4" y="212" width="2" height="1"/><rect x="4" y="215" width="2" height="1"/><rect x="4" y="218" width="2" height="1"/><rect x="4" y="221" width="2" height="1"/><rect x="4" y="224" width="2" height="1"/><rect x="4" y="227" width="2" height="1"/><rect x="4" y="230" width="2" height="1"/><rect x="4" y="233" width="2" height="1"/><rect x="4" y="236" width="2" height="1"/><rect x="4" y="239" width="2" height="1"/><rect x="2" y="242" width="6" height="1"/><rect x="4" y="245" width="2" height="1"/><rect x="4" y="248" width="2" height="1"/><rect x="4" y="251" width="2" height="1"/><rect x="4" y="254" width="2" height="1"/><rect x="4" y="257" width="2" height="1"/><rect x="4" y="260" width="2" height="1"/><rect x="4" y="263" width="2" height="1"/><rect x="4" y="266" width="2" height="1"/><rect x="4" y="269" width="2" height="1"/><rect x="4" y="272" width="2" height="1"/><rect x="2" y="275" width="6" height="1"/><rect x="4" y="278" width="2" height="1"/><rect x="4" y="281" width="2" height="1"/><rect x="4" y="284" width="2" height="1"/><rect x="4" y="287" width="2" height="1"/><rect x="4" y="290" width="2" height="1"/><rect x="4" y="293" width="2" height="1"/><rect x="4" y="296" width="2" height="1"/><rect x="4" y="299" width="2" height="1"/><rect x="4" y="302" width="2" height="1"/><rect x="4" y="305" width="2" height="1"/><rect x="2" y="308" width="6" height="1"/><rect x="4" y="311" width="2" height="1"/><rect x="4" y="314" width="2" height="1"/><rect x="4" y="317" width="2" height="1"/><rect x="4" y="320" width="2" height="1"/><rect x="4" y="323" width="2" height="1"/><rect x="4" y="326" width="2" height="1"/><rect x="4" y="329" width="2" height="1"/><rect x="4" y="332" width="2" height="1"/><rect x="4" y="335" width="2" height="1"/><rect x="4" y="338" width="2" height="1"/><rect x="2" y="341" width="6" height="1"/><rect x="4" y="344" width="2" height="1"/><rect x="4" y="347" width="2" height="1"/><rect x="4" y="350" width="2" height="1"/><rect x="4" y="353" width="2" height="1"/><rect x="4" y="356" width="2" height="1"/><rect x="4" y="359" width="2" height="1"/><rect x="4" y="362" width="2" height="1"/><rect x="4" y="365" width="2" height="1"/><rect x="4" y="368" width="2" height="1"/><rect x="4" y="371" width="2" height="1"/><rect x="2" y="374" width="6" height="1"/><rect x="4" y="377" width="2" height="1"/><rect x="4" y="380" width="2" height="1"/><rect x="4" y="383" width="2" height="1"/><rect x="4" y="386" width="2" height="1"/><rect x="4" y="389" width="2" height="1"/><rect x="4" y="392" width="2" height="1"/><rect x="4" y="395" width="2" height="1"/><rect x="4" y="398" width="2" height="1"/><rect x="4" y="401" width="2" height="1"/><rect x="4" y="404" width="2" height="1"/><rect x="2" y="407" width="6" height="1"/><rect x="4" y="410" width="2" height="1"/><rect x="4" y="413" width="2" height="1"/><rect x="4" y="416" width="2" height="1"/><rect x="4" y="419" width="2" height="1"/><rect x="4" y="422" width="2" height="1"/><rect x="4" y="425" width="2" height="1"/><rect x="4" y="428" width="2" height="1"/><rect x="4" y="431" width="2" height="1"/><rect x="4" y="434" width="2" height="1"/><rect x="4" y="437" width="2" height="1"/><rect x="2" y="440" width="6" height="1"/><rect x="4" y="443" width="2" height="1"/><rect x="4" y="446" width="2" height="1"/><rect x="4" y="449" width="2" height="1"/><rect x="4" y="452" width="2" height="1"/><rect x="4" y="455" width="2" height="1"/><rect x="4" y="458" width="2" height="1"/><rect x="4" y="461" width="2" height="1"/><rect x="4" y="464" width="2" height="1"/><rect x="4" y="467" width="2" height="1"/><rect x="4" y="470" width="2" height="1"/><rect x="2" y="473" width="6" height="1"/><rect x="4" y="476" width="2" height="1"/><rect x="4" y="479" width="2" height="1"/><rect x="4" y="482" width="2" height="1"/><rect x="4" y="485" width="2" height="1"/><rect x="4" y="488" width="2" height="1"/><rect x="4" y="491" width="2" height="1"/><rect x="4" y="494" width="2" height="1"/><rect x="4" y="497" width="2" height="1"/><rect x="4" y="500" width="2" height="1"/><rect x="4" y="503" width="2" height="1"/><rect x="2" y="506" width="6" height="1"/><rect x="4" y="509" width="2" height="1"/><rect x="4" y="512" width="2" height="1"/><rect x="4" y="515" width="2" height="1"/><rect x="4" y="518" width="2" height="1"/><rect x="4" y="521" width="2" height="1"/><rect x="4" y="524" width="2" height="1"/></g></svg>
<div class="a" style="left:167px;top:112px;width:554px;height:526px;background:#aeabb9"></div>
<div class="a" style="left:168px;top:113px;width:552px;height:524px;background:#fff"></div>
<div class="a" style="left:151px;top:637px;width:571px;height:2px;background:#a4a9b1"></div>
<div class="a" style="left:720px;top:98px;width:2px;height:541px;background:#a4a9b1"></div>
<!-- markers -->
<svg class="a" style="left:439px;top:96px" width="12" height="14" viewBox="0 0 12 14"><rect x="3" y="2" width="1" height="11" fill="#e87ae8"/><path d="M0 0 H11 L5.5 5.5 Z" fill="#7c8092"/></svg>
<svg class="a" style="left:151px;top:369px" width="16" height="13" viewBox="0 0 16 13"><rect x="2" y="4" width="12" height="1" fill="#e87ae8"/><path d="M0 0 V12 L6 6 Z" fill="#7c8092"/></svg>
<!-- info bar -->
<svg class="a" style="left:316px;top:618px" width="405" height="20" viewBox="0 0 405 20"><path d="M19 0 H405 V20 H0 Z" fill="#a9afb8"/></svg>
<div class="a info" style="left:341px">扁平图片</div>
<div class="a info" style="left:388px">| 2970 × 2100 px</div>
<div class="a info" style="left:475.5px">| 297 × 210 mm = A4 纸</div>
<div class="a info" style="left:599.5px;transform:scaleX(0.97)">| x/y = 10:7</div>
<div class="a info" style="left:660.5px;transform:scaleX(0.94)">| 6.237 MP</div>
<!-- v scrollbar -->
<div class="a" style="left:722px;top:96px;width:1px;height:544px;background:#fff"></div>
<div class="a" style="left:723px;top:96px;width:17px;height:561px;background:#f0f0f0"></div>
<div class="a" style="left:724px;top:266px;width:14px;height:220px;background:#cdcdcd"></div>
<svg class="a" style="left:727px;top:102px" width="8" height="7" viewBox="0 0 8 7"><path d="M3 0 H5 L8 3.5 V6.5 L4 2.8 L0 6.5 V3.5 Z" fill="#5a5a5a"/></svg>
<svg class="a" style="left:727px;top:627px" width="8" height="7" viewBox="0 0 8 7"><path d="M3 7 H5 L8 3.5 V0.5 L4 4.2 L0 0.5 V3.5 Z" fill="#5a5a5a"/></svg>
<!-- h scrollbar -->
<div class="a" style="left:151px;top:639px;width:572px;height:1px;background:#fff"></div>
<div class="a" style="left:151px;top:640px;width:589px;height:17px;background:#f0f0f0"></div>
<div class="a" style="left:346px;top:641px;width:195px;height:15px;background:#cdcdcd"></div>
<svg class="a" style="left:156px;top:644px" width="7" height="8" viewBox="0 0 7 8"><path d="M7 3 V5 L3.5 8 H0.5 L4.2 4 L0.5 0 H3.5 Z" transform="translate(7 0) scale(-1 1)" fill="#5a5a5a"/></svg>
<svg class="a" style="left:711px;top:644px" width="7" height="8" viewBox="0 0 7 8"><path d="M7 3 V5 L3.5 8 H0.5 L4.2 4 L0.5 0 H3.5 Z" fill="#5a5a5a"/></svg>
<div class="a" style="left:149px;top:639px;width:2px;height:18px;background:#6a6d72"></div>
<div class="a" style="left:149px;top:657px;width:592px;height:1px;background:#fff"></div>
<div class="a" style="left:740px;top:94px;width:1px;height:564px;background:#fff"></div>
<div class="a" style="left:722px;top:94px;width:18px;height:2px;background:#727578"></div>
<!-- grip -->
<svg class="a" style="left:744px;top:360px" width="5" height="30" viewBox="0 0 5 30"><rect x="0" y="0" width="3" height="3" fill="#8d949e"/><rect x="1" y="1" width="2.5" height="2.5" fill="#fff"/><rect x="0" y="6" width="3" height="3" fill="#8d949e"/><rect x="1" y="7" width="2.5" height="2.5" fill="#fff"/><rect x="0" y="12" width="3" height="3" fill="#8d949e"/><rect x="1" y="13" width="2.5" height="2.5" fill="#fff"/><rect x="0" y="18" width="3" height="3" fill="#8d949e"/><rect x="1" y="19" width="2.5" height="2.5" fill="#fff"/><rect x="0" y="24" width="3" height="3" fill="#8d949e"/><rect x="1" y="25" width="2.5" height="2.5" fill="#fff"/></svg>



<div id="panel"></div>

<!-- tabs -->
<div class="a" style="left:814px;top:68px;width:54px;height:27px;border:1px solid #4d5a6a;border-bottom:none;background:linear-gradient(#dfe2e9,#d2d6de)"></div>
<div class="a" style="left:867px;top:68px;width:55px;height:27px;border:1px solid #4d5a6a;border-bottom:none;background:linear-gradient(#dfe2e9,#d2d6de)"></div>
<div class="a" style="left:921px;top:68px;width:55px;height:27px;border:1px solid #4d5a6a;border-bottom:none;background:linear-gradient(#dfe2e9,#d2d6de)"></div>
<!-- panel body -->
<div class="a" style="left:751px;top:94px;width:247px;height:556px;border:1px solid #4d5a6a;border-right:none;background:#dfe2eb"></div>
<div class="a" style="left:752px;top:650px;width:246px;height:5px;background:linear-gradient(rgba(80,90,105,0.45),rgba(80,90,105,0))"></div>
<div class="a" style="left:752px;top:95px;width:245px;height:3px;background:#fbfcfd"></div>
<div class="a" style="left:996px;top:95px;width:1px;height:554px;background:#f4f6f9"></div>
<!-- active tab -->
<div class="a" style="left:759px;top:64px;width:55px;height:32px;border:1px solid #4d5a6a;border-bottom:none;background:#fff;box-shadow:inset 0 1px 0 #d6f2ff"></div>
<div class="a" style="left:760px;top:94px;width:53px;height:4px;background:#fff"></div>
<!-- tab icons -->
<svg class="a" style="left:775px;top:72px" width="22" height="16" viewBox="0 0 22 16">
<path d="M1.5 13.5 L8 6" stroke="#c8401a" stroke-width="2.2" stroke-linecap="round"/>
<path d="M5 4 C7 1 10 0.5 13 2.5 L11.5 6.5 C10 5 8 4.5 6 5.5 Z" fill="#f0d020" stroke="#7a6010" stroke-width="0.8"/>
<rect x="15" y="4" width="5" height="5" fill="#ff30ff" stroke="#444" stroke-width="0.6"/>
<rect x="9.5" y="9.5" width="5" height="5" fill="#30ff30" stroke="#444" stroke-width="0.6"/>
<rect x="15" y="9.5" width="5" height="5" fill="#ffff30" stroke="#444" stroke-width="0.6"/>
</svg>
<svg class="a" style="left:830px;top:75px" width="20" height="14" viewBox="0 0 20 14">
<g fill="#e6e8ec" stroke="#aeb4bc" stroke-width="0.9"><path d="M1 9 L5 7 H18 L19 9 L15 12 H1 Z"/><path d="M1 6 L5 4 H18 L19 6 L15 9 H1 Z"/><path d="M1 3 L5 1 H18 L19 3 L15 6 H1 Z"/></g>
</svg>
<svg class="a" style="left:882px;top:74px" width="23" height="15" viewBox="0 0 23 15">
<path d="M0.5 8 L6 3 V6 C9 6 12 7.5 13 12 C11 10 9 9.5 6 9.5 V13 Z" fill="#8a9099"/>
<path d="M10 1 H22 M12 4 H22 M12 7 H22 M14 10 H22" stroke="#8a9099" stroke-width="1.3"/>
</svg>
<svg class="a" style="left:940px;top:75px" width="17" height="14" viewBox="0 0 17 14">
<path d="M0.5 1.5 Q0.5 0.5 1.5 0.5 H6 L7.5 2 H15.5 Q16.5 2 16.5 3 V12.5 Q16.5 13.5 15.5 13.5 H1.5 Q0.5 13.5 0.5 12.5 Z" fill="#f2e2b6" stroke="#d7c38e"/>
</svg>
<!-- header -->
<div class="a" style="left:753px;top:100px;width:244px;height:24px;background:#fafbfd"></div>
<div class="a" style="left:754px;top:101px;width:242px;height:22px;border:1px solid #56636f;background:#ddeeff"></div>
<div class="a" style="left:762px;top:102px;font-size:13px;line-height:18px;color:#2e3440;text-shadow:1px 1px 0 rgba(120,140,170,0.45);white-space:nowrap">工具选项和颜色</div>
<!-- boxes -->
<div class="a etch" style="left:760px;top:131px;width:149px;height:18px"></div>
<div class="a etch" style="left:915px;top:131px;width:74px;height:74px"></div>
<svg class="a" style="left:921px;top:137px" width="63" height="63" viewBox="0 0 63 63"><circle cx="31.5" cy="31.5" r="29.8" fill="none" stroke="#a2a6ae" stroke-width="1"/></svg>
<div class="a etch" style="left:760px;top:211px;width:229px;height:30px"></div>
<div class="a" style="left:760px;top:219px;width:229px;text-align:center;font-size:12px;line-height:16px;color:#4a4f58">没有材质</div>
<div class="a etch" style="left:761px;top:247px;width:228px;height:229px"></div>
<!-- fg/bg swatches -->
<div class="a" style="left:784px;top:271px;width:30px;height:30px;border:1px solid #a5abb3;background:#00f;box-shadow:inset 0 0 0 1px #f0f2f5"></div>
<div class="a" style="left:769px;top:256px;width:30px;height:30px;border:1px solid #000;background:#000;box-shadow:inset 0 0 0 1px #fff"></div>
<svg class="a" style="left:803px;top:255px" width="12" height="12" viewBox="0 0 12 12">
<path d="M2 5.5 V1.5 H5.5 Q9.5 1.5 9.5 5.5 V9" fill="none" stroke="#5a6676" stroke-width="1.5"/>
<path d="M0 3.5 L2 0.5 L4 3.5 Z M7 8 H12 L9.5 11.5 Z" fill="#5a6676"/>
</svg>
<svg class="a" style="left:822px;top:256px" width="20" height="45" viewBox="0 0 20 45">
<defs><pattern id="chk2" width="8" height="8" patternUnits="userSpaceOnUse" x="2" y="2"><rect width="8" height="8" fill="#fff"/><rect width="4" height="4" fill="#c8c8c8"/><rect x="4" y="4" width="4" height="4" fill="#c8c8c8"/></pattern>
<linearGradient id="gbh" x1="0" y1="0" x2="1" y2="0"><stop offset="0" stop-color="#000"/><stop offset="1" stop-color="#00f"/></linearGradient>
<linearGradient id="gva" x1="0" y1="0" x2="0" y2="1"><stop offset="0" stop-color="#fff"/><stop offset="1" stop-color="#000"/></linearGradient>
<mask id="mva"><rect width="20" height="45" fill="url(#gva)"/></mask></defs>
<rect x="0.5" y="0.5" width="19" height="44" fill="#eef0f3" stroke="#a5abb3"/>
<rect x="2" y="2" width="16" height="41" fill="url(#chk2)"/>
<rect x="2" y="2" width="16" height="41" fill="url(#gbh)" mask="url(#mva)"/>
</svg>
<div class="a mono" style="left:850px;top:257px">#000000/00</div>
<div class="a mono" style="left:850px;top:270px">#0000FF/FF</div>
<div class="a" style="left:849px;top:287px;font-family:'Liberation Serif',serif;font-weight:bold;font-size:13px;line-height:15px;color:#7f8995;letter-spacing:0.3px">HSV</div>
<div class="a" style="left:928px;top:266px;font-family:'Liberation Serif',serif;font-size:22px;line-height:26px;color:#a9b1bb;letter-spacing:1.5px">#1</div>
<svg class="a" style="left:964px;top:260px" width="12" height="12" viewBox="0 0 12 12"><path d="M1 2 H11 M1 6 H11 M1 10 H11" stroke="#4f5b6b" stroke-width="2"/></svg>
<svg class="a" style="left:965px;top:287px" width="11" height="7" viewBox="0 0 11 7"><path d="M0.5 6 L5.5 1 L10.5 6 Z" fill="#58606b"/></svg>
<!-- SV -->
<div class="a" style="left:769px;top:309px;width:181px;height:158px;background:linear-gradient(to top,#000,rgba(0,0,0,0)),linear-gradient(to right,#fff,#f00)"></div>
<svg class="a" style="left:765px;top:462px" width="9" height="9" viewBox="0 0 9 9"><rect x="0.5" y="0.5" width="8" height="8" fill="#fff" stroke="#222"/><rect x="3" y="3" width="3" height="3" fill="#000"/><rect x="2.5" y="2.5" width="4" height="4" fill="none" stroke="#000"/></svg>
<!-- hue -->
<div class="a" style="left:962px;top:309px;width:14px;height:158px;background:linear-gradient(#f00 0%,#f0f 16.6%,#00f 33.3%,#0ff 50%,#0f0 66.6%,#ff0 83.3%,#f00 100%)"></div>
<svg class="a" style="left:956px;top:461px" width="26" height="11" viewBox="0 0 26 11"><path d="M0.5 0 V10.5 L6 5.3 Z M25.5 0 V10.5 L20 5.3 Z" fill="#222"/></svg>
<!-- palette -->
<div class="a etch" style="left:760px;top:482px;width:229px;height:156px"></div>
<svg class="a" style="left:770px;top:494px" width="160" height="13" viewBox="0 0 160 13"><rect x="0" y="0" width="12" height="12" fill="#000000"/><rect x="13" y="0" width="12" height="12" fill="#404040"/><rect x="26" y="0" width="12" height="12" fill="#808080"/><rect x="39" y="0" width="12" height="12" fill="#c0c0c0"/><rect x="52" y="0" width="12" height="12" fill="#ffffff"/><rect x="65" y="0" width="12" height="12" fill="#c0c0c0"/><rect x="78" y="0" width="12" height="12" fill="#c0c0c0"/><rect x="91" y="0" width="12" height="12" fill="#c0c0c0"/><rect x="104" y="0" width="12" height="12" fill="#c0c0c0"/><rect x="117" y="0" width="12" height="12" fill="#c0c0c0"/><rect x="130" y="0" width="12" height="12" fill="#c0c0c0"/><rect x="143" y="0" width="12" height="12" fill="#c0c0c0"/><g fill="none" stroke="rgba(0,0,30,0.18)"><rect x="0.5" y="0.5" width="11" height="11"/><rect x="13.5" y="0.5" width="11" height="11"/><rect x="26.5" y="0.5" width="11" height="11"/><rect x="39.5" y="0.5" width="11" height="11"/><rect x="52.5" y="0.5" width="11" height="11"/><rect x="65.5" y="0.5" width="11" height="11"/><rect x="78.5" y="0.5" width="11" height="11"/><rect x="91.5" y="0.5" width="11" height="11"/><rect x="104.5" y="0.5" width="11" height="11"/><rect x="117.5" y="0.5" width="11" height="11"/><rect x="130.5" y="0.5" width="11" height="11"/><rect x="143.5" y="0.5" width="11" height="11"/></g></svg>
<svg class="a" style="left:940px;top:497px" width="11" height="7" viewBox="0 0 11 7"><path d="M0.5 6 L5.5 1 L10.5 6 Z" fill="#707884"/></svg>
<svg class="a" style="left:964px;top:495px" width="12" height="12" viewBox="0 0 12 12"><path d="M1 2 H11 M1 6 H11 M1 10 H11" stroke="#4f5b6b" stroke-width="2"/></svg>
<div class="a" style="left:769px;top:513px;width:134px;height:2px;border-top:1px solid #c6cad2;background:#f6f7f9"></div>
<div class="a" style="left:844px;top:519px;font-size:12px;line-height:16px;color:#a2a8b2;white-space:nowrap">默认调色板</div>
<svg class="a" style="left:772px;top:542px" width="182" height="91" viewBox="0 0 182 91"><rect x="0" y="0" width="11" height="11" fill="#000000"/><rect x="13" y="0" width="11" height="11" fill="#000080"/><rect x="26" y="0" width="11" height="11" fill="#008000"/><rect x="39" y="0" width="11" height="11" fill="#008080"/><rect x="52" y="0" width="11" height="11" fill="#800000"/><rect x="65" y="0" width="11" height="11" fill="#800080"/><rect x="78" y="0" width="11" height="11" fill="#808000"/><rect x="91" y="0" width="11" height="11" fill="#c0c0c0"/><rect x="104" y="0" width="11" height="11" fill="#808080"/><rect x="117" y="0" width="11" height="11" fill="#0000ff"/><rect x="130" y="0" width="11" height="11" fill="#00ff00"/><rect x="143" y="0" width="11" height="11" fill="#00ffff"/><rect x="156" y="0" width="11" height="11" fill="#ff0000"/><rect x="169" y="0" width="11" height="11" fill="#ff00ff"/><rect x="0" y="13" width="11" height="11" fill="#ffff00"/><rect x="13" y="13" width="11" height="11" fill="#ffffff"/><rect x="26" y="13" width="11" height="11" fill="#696969"/><rect x="39" y="13" width="11" height="11" fill="#2f4f4f"/><rect x="52" y="13" width="11" height="11" fill="#708090"/><rect x="65" y="13" width="11" height="11" fill="#778899"/><rect x="78" y="13" width="11" height="11" fill="#bebebe"/><rect x="91" y="13" width="11" height="11" fill="#d3d3d3"/><rect x="104" y="13" width="11" height="11" fill="#dcdcdc"/><rect x="117" y="13" width="11" height="11" fill="#e6e6fa"/><rect x="130" y="13" width="11" height="11" fill="#fff0f5"/><rect x="143" y="13" width="11" height="11" fill="#fffafa"/><rect x="156" y="13" width="11" height="11" fill="#f8f8ff"/><rect x="169" y="13" width="11" height="11" fill="#f5f5f5"/><rect x="0" y="26" width="11" height="11" fill="#fffaf0"/><rect x="13" y="26" width="11" height="11" fill="#fdf5e6"/><rect x="26" y="26" width="11" height="11" fill="#faf0e6"/><rect x="39" y="26" width="11" height="11" fill="#faebd7"/><rect x="52" y="26" width="11" height="11" fill="#ffefd5"/><rect x="65" y="26" width="11" height="11" fill="#ffebcd"/><rect x="78" y="26" width="11" height="11" fill="#ffe4c4"/><rect x="91" y="26" width="11" height="11" fill="#ffdab9"/><rect x="104" y="26" width="11" height="11" fill="#ffdead"/><rect x="117" y="26" width="11" height="11" fill="#ffe4b5"/><rect x="130" y="26" width="11" height="11" fill="#fffacd"/><rect x="143" y="26" width="11" height="11" fill="#fff8dc"/><rect x="156" y="26" width="11" height="11" fill="#fffff0"/><rect x="169" y="26" width="11" height="11" fill="#fff5ee"/><rect x="0" y="39" width="11" height="11" fill="#f0fff0"/><rect x="13" y="39" width="11" height="11" fill="#f5fffa"/><rect x="26" y="39" width="11" height="11" fill="#f0ffff"/><rect x="39" y="39" width="11" height="11" fill="#f0f8ff"/><rect x="52" y="39" width="11" height="11" fill="#ffe4e1"/><rect x="65" y="39" width="11" height="11" fill="#e9967a"/><rect x="78" y="39" width="11" height="11" fill="#fa8072"/><rect x="91" y="39" width="11" height="11" fill="#ffa07a"/><rect x="104" y="39" width="11" height="11" fill="#ffa500"/><rect x="117" y="39" width="11" height="11" fill="#ff8c00"/><rect x="130" y="39" width="11" height="11" fill="#ff7f50"/><rect x="143" y="39" width="11" height="11" fill="#f08080"/><rect x="156" y="39" width="11" height="11" fill="#ff6347"/><rect x="169" y="39" width="11" height="11" fill="#ff4500"/><rect x="0" y="52" width="11" height="11" fill="#ff69b4"/><rect x="13" y="52" width="11" height="11" fill="#ff1493"/><rect x="26" y="52" width="11" height="11" fill="#ffc0cb"/><rect x="39" y="52" width="11" height="11" fill="#ffb6c1"/><rect x="52" y="52" width="11" height="11" fill="#db7093"/><rect x="65" y="52" width="11" height="11" fill="#b03060"/><rect x="78" y="52" width="11" height="11" fill="#c71585"/><rect x="91" y="52" width="11" height="11" fill="#d02090"/><rect x="104" y="52" width="11" height="11" fill="#ee82ee"/><rect x="117" y="52" width="11" height="11" fill="#d8bfd8"/><rect x="130" y="52" width="11" height="11" fill="#dda0dd"/><rect x="143" y="52" width="11" height="11" fill="#da70d6"/><rect x="156" y="52" width="11" height="11" fill="#ba55d3"/><rect x="169" y="52" width="11" height="11" fill="#9932cc"/><rect x="0" y="65" width="11" height="11" fill="#9400d3"/><rect x="13" y="65" width="11" height="11" fill="#8a2be2"/><rect x="26" y="65" width="11" height="11" fill="#a020f0"/><rect x="39" y="65" width="11" height="11" fill="#9370db"/><rect x="52" y="65" width="11" height="11" fill="#6495ed"/><rect x="65" y="65" width="11" height="11" fill="#191970"/><rect x="78" y="65" width="11" height="11" fill="#483d8b"/><rect x="91" y="65" width="11" height="11" fill="#6a5acd"/><rect x="104" y="65" width="11" height="11" fill="#7b68ee"/><rect x="117" y="65" width="11" height="11" fill="#8470ff"/><rect x="130" y="65" width="11" height="11" fill="#0000cd"/><rect x="143" y="65" width="11" height="11" fill="#4169e1"/><rect x="156" y="65" width="11" height="11" fill="#1e90ff"/><rect x="169" y="65" width="11" height="11" fill="#00bfff"/><rect x="0" y="78" width="11" height="11" fill="#87ceeb"/><rect x="13" y="78" width="11" height="11" fill="#87cefa"/><rect x="26" y="78" width="11" height="11" fill="#4682b4"/><rect x="39" y="78" width="11" height="11" fill="#b0c4de"/><rect x="52" y="78" width="11" height="11" fill="#add8e6"/><rect x="65" y="78" width="11" height="11" fill="#b0e0e6"/><rect x="78" y="78" width="11" height="11" fill="#afeeee"/><rect x="91" y="78" width="11" height="11" fill="#00ced1"/><rect x="104" y="78" width="11" height="11" fill="#48d1cc"/><rect x="117" y="78" width="11" height="11" fill="#40e0d0"/><rect x="130" y="78" width="11" height="11" fill="#e0ffff"/><rect x="143" y="78" width="11" height="11" fill="#5f9ea0"/><rect x="156" y="78" width="11" height="11" fill="#66cdaa"/><rect x="169" y="78" width="11" height="11" fill="#7fffd4"/><g fill="none" stroke="rgba(0,0,30,0.2)"><rect x="0.5" y="0.5" width="10" height="10"/><rect x="13.5" y="0.5" width="10" height="10"/><rect x="26.5" y="0.5" width="10" height="10"/><rect x="39.5" y="0.5" width="10" height="10"/><rect x="52.5" y="0.5" width="10" height="10"/><rect x="65.5" y="0.5" width="10" height="10"/><rect x="78.5" y="0.5" width="10" height="10"/><rect x="91.5" y="0.5" width="10" height="10"/><rect x="104.5" y="0.5" width="10" height="10"/><rect x="117.5" y="0.5" width="10" height="10"/><rect x="130.5" y="0.5" width="10" height="10"/><rect x="143.5" y="0.5" width="10" height="10"/><rect x="156.5" y="0.5" width="10" height="10"/><rect x="169.5" y="0.5" width="10" height="10"/><rect x="0.5" y="13.5" width="10" height="10"/><rect x="13.5" y="13.5" width="10" height="10"/><rect x="26.5" y="13.5" width="10" height="10"/><rect x="39.5" y="13.5" width="10" height="10"/><rect x="52.5" y="13.5" width="10" height="10"/><rect x="65.5" y="13.5" width="10" height="10"/><rect x="78.5" y="13.5" width="10" height="10"/><rect x="91.5" y="13.5" width="10" height="10"/><rect x="104.5" y="13.5" width="10" height="10"/><rect x="117.5" y="13.5" width="10" height="10"/><rect x="130.5" y="13.5" width="10" height="10"/><rect x="143.5" y="13.5" width="10" height="10"/><rect x="156.5" y="13.5" width="10" height="10"/><rect x="169.5" y="13.5" width="10" height="10"/><rect x="0.5" y="26.5" width="10" height="10"/><rect x="13.5" y="26.5" width="10" height="10"/><rect x="26.5" y="26.5" width="10" height="10"/><rect x="39.5" y="26.5" width="10" height="10"/><rect x="52.5" y="26.5" width="10" height="10"/><rect x="65.5" y="26.5" width="10" height="10"/><rect x="78.5" y="26.5" width="10" height="10"/><rect x="91.5" y="26.5" width="10" height="10"/><rect x="104.5" y="26.5" width="10" height="10"/><rect x="117.5" y="26.5" width="10" height="10"/><rect x="130.5" y="26.5" width="10" height="10"/><rect x="143.5" y="26.5" width="10" height="10"/><rect x="156.5" y="26.5" width="10" height="10"/><rect x="169.5" y="26.5" width="10" height="10"/><rect x="0.5" y="39.5" width="10" height="10"/><rect x="13.5" y="39.5" width="10" height="10"/><rect x="26.5" y="39.5" width="10" height="10"/><rect x="39.5" y="39.5" width="10" height="10"/><rect x="52.5" y="39.5" width="10" height="10"/><rect x="65.5" y="39.5" width="10" height="10"/><rect x="78.5" y="39.5" width="10" height="10"/><rect x="91.5" y="39.5" width="10" height="10"/><rect x="104.5" y="39.5" width="10" height="10"/><rect x="117.5" y="39.5" width="10" height="10"/><rect x="130.5" y="39.5" width="10" height="10"/><rect x="143.5" y="39.5" width="10" height="10"/><rect x="156.5" y="39.5" width="10" height="10"/><rect x="169.5" y="39.5" width="10" height="10"/><rect x="0.5" y="52.5" width="10" height="10"/><rect x="13.5" y="52.5" width="10" height="10"/><rect x="26.5" y="52.5" width="10" height="10"/><rect x="39.5" y="52.5" width="10" height="10"/><rect x="52.5" y="52.5" width="10" height="10"/><rect x="65.5" y="52.5" width="10" height="10"/><rect x="78.5" y="52.5" width="10" height="10"/><rect x="91.5" y="52.5" width="10" height="10"/><rect x="104.5" y="52.5" width="10" height="10"/><rect x="117.5" y="52.5" width="10" height="10"/><rect x="130.5" y="52.5" width="10" height="10"/><rect x="143.5" y="52.5" width="10" height="10"/><rect x="156.5" y="52.5" width="10" height="10"/><rect x="169.5" y="52.5" width="10" height="10"/><rect x="0.5" y="65.5" width="10" height="10"/><rect x="13.5" y="65.5" width="10" height="10"/><rect x="26.5" y="65.5" width="10" height="10"/><rect x="39.5" y="65.5" width="10" height="10"/><rect x="52.5" y="65.5" width="10" height="10"/><rect x="65.5" y="65.5" width="10" height="10"/><rect x="78.5" y="65.5" width="10" height="10"/><rect x="91.5" y="65.5" width="10" height="10"/><rect x="104.5" y="65.5" width="10" height="10"/><rect x="117.5" y="65.5" width="10" height="10"/><rect x="130.5" y="65.5" width="10" height="10"/><rect x="143.5" y="65.5" width="10" height="10"/><rect x="156.5" y="65.5" width="10" height="10"/><rect x="169.5" y="65.5" width="10" height="10"/><rect x="0.5" y="78.5" width="10" height="10"/><rect x="13.5" y="78.5" width="10" height="10"/><rect x="26.5" y="78.5" width="10" height="10"/><rect x="39.5" y="78.5" width="10" height="10"/><rect x="52.5" y="78.5" width="10" height="10"/><rect x="65.5" y="78.5" width="10" height="10"/><rect x="78.5" y="78.5" width="10" height="10"/><rect x="91.5" y="78.5" width="10" height="10"/><rect x="104.5" y="78.5" width="10" height="10"/><rect x="117.5" y="78.5" width="10" height="10"/><rect x="130.5" y="78.5" width="10" height="10"/><rect x="143.5" y="78.5" width="10" height="10"/><rect x="156.5" y="78.5" width="10" height="10"/><rect x="169.5" y="78.5" width="10" height="10"/></g></svg>
<div class="a" style="left:963px;top:542px;width:17px;height:88px;border:1px solid #9aa2ac;background:#e4e7ed"></div>
<div class="a" style="left:963px;top:558px;width:17px;height:1px;background:#9aa2ac"></div>
<div class="a" style="left:963px;top:612px;width:17px;height:1px;background:#9aa2ac"></div>
<div class="a" style="left:964px;top:558px;width:15px;height:20px;border:2px solid #9aa2ac;background:#d2d6dd"></div>
<svg class="a" style="left:966px;top:547px" width="11" height="7" viewBox="0 0 11 7"><path d="M0.5 6 L5.5 1 L10.5 6 Z" fill="#9aa2ac"/></svg>
<svg class="a" style="left:966px;top:618px" width="11" height="7" viewBox="0 0 11 7"><path d="M0.5 1 L5.5 6 L10.5 1 Z" fill="#9aa2ac"/></svg>



<div class="a" style="left:843px;top:663px;width:2px;height:18px;border-left:1px solid #c4c8d0;background:#f6f7f9"></div>
<div class="a" style="left:915px;top:663px;width:2px;height:18px;border-left:1px solid #c4c8d0;background:#f6f7f9"></div>
<svg class="a" style="left:858px;top:664px" width="24" height="15" viewBox="0 0 24 15">
<rect x="0.5" y="0.5" width="22" height="10" fill="#2f9a34" stroke="#1b5e20"/>
<rect x="3" y="2.5" width="4" height="6" fill="#3a3a3a"/><rect x="9.5" y="2.5" width="4" height="6" fill="#3a3a3a"/><rect x="16" y="2.5" width="4" height="6" fill="#3a3a3a"/>
<rect x="3.5" y="2.8" width="1.5" height="5" fill="#888"/><rect x="10" y="2.8" width="1.5" height="5" fill="#888"/><rect x="16.5" y="2.8" width="1.5" height="5" fill="#888"/>
<rect x="0.5" y="11" width="22" height="3" fill="#caa020"/>
<path d="M3.5 11 V14 M7 11 V14 M10.5 11 V14 M14 11 V14 M17.5 11 V14" stroke="#7a6010" stroke-width="0.8"/>
</svg>
<div class="a" style="left:888px;top:665px;font-family:"Liberation Serif",serif;font-weight:bold;font-size:15px;line-height:16px;color:#3b4452;letter-spacing:1px">71</div>
<div class="a" style="left:924px;top:662px;font-size:14.5px;line-height:18px;font-weight:bold;font-style:italic;color:#5c6f8f;white-space:nowrap">JpCHA</div>
<div class="a" style="left:975px;top:662px;font-size:9px;line-height:10px;font-weight:bold;color:#5c6f8f">2</div>
<svg class="a" style="left:985px;top:674px" width="9" height="9" viewBox="0 0 9 9"><g fill="#3a3f48"><rect x="6" y="0" width="2" height="2"/><rect x="3" y="3" width="2" height="2"/><rect x="6" y="3" width="2" height="2"/><rect x="0" y="6" width="2" height="2"/><rect x="3" y="6" width="2" height="2"/><rect x="6" y="6" width="2" height="2"/></g></svg>
</body></html>
